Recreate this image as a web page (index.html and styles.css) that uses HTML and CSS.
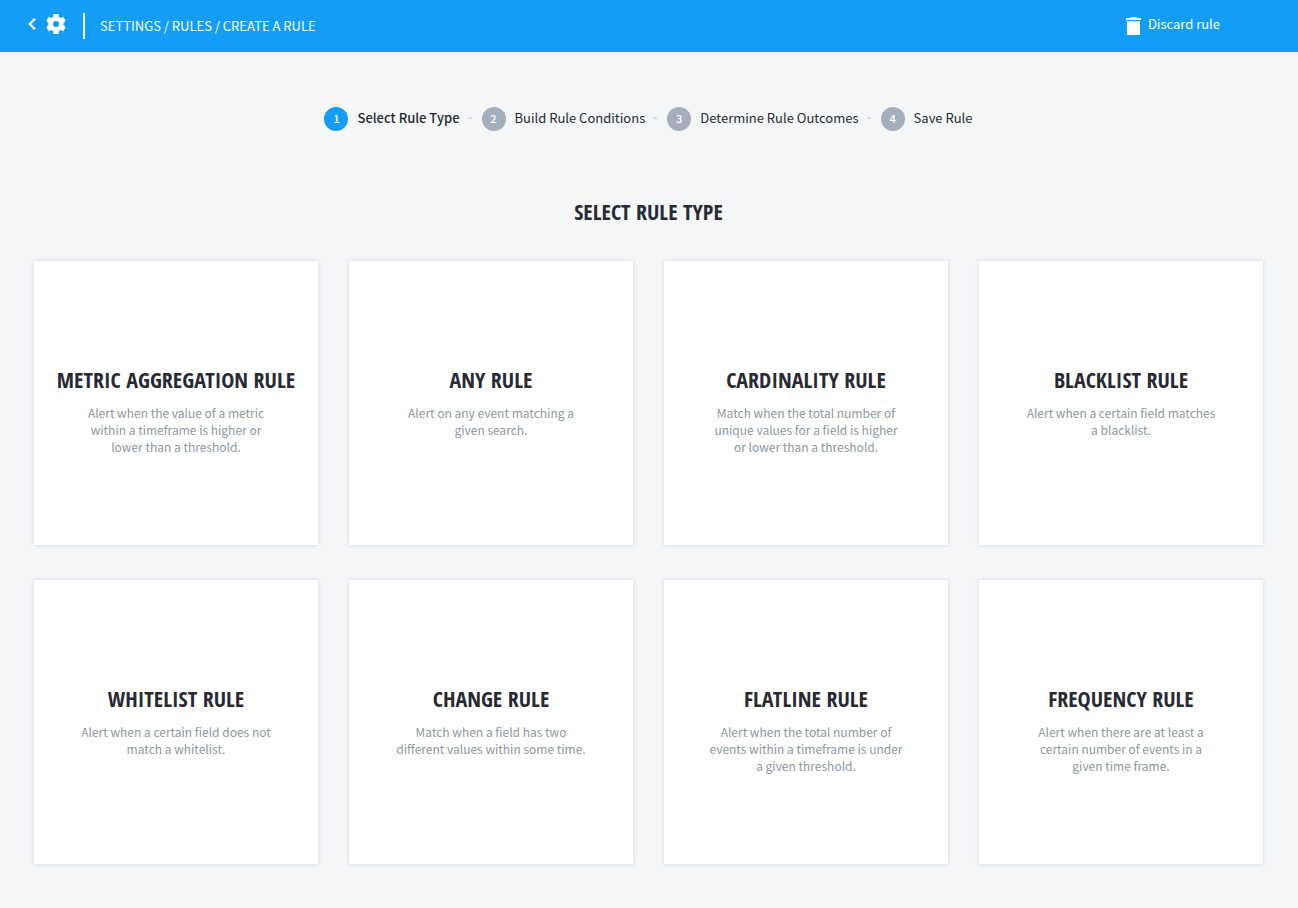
FILE: index.html
```html
<!DOCTYPE html>
<html lang="en">
<head>
<meta charset="utf-8">
<title>Create a Rule</title>
<link rel="stylesheet" href="styles.css">
</head>
<body>
<header class="topbar">
  <a class="back" href="#" aria-label="Back to settings">
    <svg class="chevron" viewBox="0 0 8 12"><path d="M7 .8 1.8 6 7 11.2" fill="none" stroke="#fff" stroke-width="2.2"/></svg>
    <svg class="gear" viewBox="2 2 20 20"><path fill="#fff" d="M19.43 12.98c.04-.32.07-.64.07-.98s-.03-.66-.07-.98l2.11-1.65c.19-.15.24-.42.12-.64l-2-3.46c-.12-.22-.39-.3-.61-.22l-2.49 1c-.52-.4-1.08-.73-1.69-.98l-.38-2.65C14.46 2.18 14.25 2 14 2h-4c-.25 0-.46.18-.49.42l-.38 2.65c-.61.25-1.17.59-1.69.98l-2.49-1c-.23-.09-.49 0-.61.22l-2 3.46c-.13.22-.07.49.12.64l2.11 1.65c-.04.32-.07.65-.07.98s.03.66.07.98l-2.11 1.65c-.19.15-.24.42-.12.64l2 3.46c.12.22.39.3.61.22l2.49-1c.52.4 1.08.73 1.69.98l.38 2.65c.03.24.24.42.49.42h4c.25 0 .46-.18.49-.42l.38-2.65c.61-.25 1.17-.59 1.69-.98l2.49 1c.23.09.49 0 .61-.22l2-3.46c.12-.22.07-.49-.12-.64l-2.11-1.65zM12 15.1a3.1 3.1 0 1 1 0-6.2 3.1 3.1 0 0 1 0 6.2z"/></svg>
  </a>
  <nav class="crumbs">SETTINGS / RULES / CREATE A RULE</nav>
  <button class="discard" type="button">
    <svg class="trash" viewBox="0 0 15 18"><path fill="#fff" d="M0 1h4l1-1h5l1 1h4v2H0zM1 4h13v13q0 1-1 1H2q-1 0-1-1z"/></svg>
    <span class="discard-label">Discard rule</span>
  </button>
</header>
<main class="page">
  <ol class="steps">
    <li class="step active"><span class="num">1</span><span class="label">Select Rule Type</span></li>
    <li class="step"><span class="num">2</span><span class="label">Build Rule Conditions</span></li>
    <li class="step"><span class="num">3</span><span class="label">Determine Rule Outcomes</span></li>
    <li class="step"><span class="num">4</span><span class="label">Save Rule</span></li>
  </ol>
  <h1 class="title">SELECT RULE TYPE</h1>
  <div class="cards">
    <button class="card" type="button"><span class="name">METRIC AGGREGATION RULE</span><span class="desc">Alert when the value of a metric<br>within a timeframe is higher or<br>lower than a threshold.</span></button>
    <button class="card" type="button"><span class="name">ANY RULE</span><span class="desc">Alert on any event matching a<br>given search.</span></button>
    <button class="card" type="button"><span class="name">CARDINALITY RULE</span><span class="desc">Match when the total number of<br>unique values for a field is higher<br>or lower than a threshold.</span></button>
    <button class="card" type="button"><span class="name">BLACKLIST RULE</span><span class="desc">Alert when a certain field matches<br>a blacklist.</span></button>
    <button class="card" type="button"><span class="name">WHITELIST RULE</span><span class="desc">Alert when a certain field does not<br>match a whitelist.</span></button>
    <button class="card" type="button"><span class="name">CHANGE RULE</span><span class="desc">Match when a field has two<br>different values within some time.</span></button>
    <button class="card" type="button"><span class="name">FLATLINE RULE</span><span class="desc">Alert when the total number of<br>events within a timeframe is under<br>a given threshold.</span></button>
    <button class="card" type="button"><span class="name">FREQUENCY RULE</span><span class="desc">Alert when there are at least a<br>certain number of events in a<br>given time frame.</span></button>
  </div>
</main>
</body>
</html>
```
FILE: styles.css
```css
* { box-sizing: border-box; }
body {
  margin: 0;
  background: #f4f6f8;
  color: #272a33;
  font: 13px/20px "Noto Sans CJK SC", "Noto Sans", sans-serif;
}
button { font: inherit; border: 0; cursor: pointer; }
svg { display: block; }

.topbar {
  display: flex;
  align-items: center;
  height: 52px;
  padding: 0 78px 0 28px;
  background: #149df4;
  color: #fff;
}
.back {
  display: flex;
  align-items: center;
  gap: 10px;
  padding-bottom: 4px;
}
.chevron { width: 8px; height: 12px; }
.gear { width: 20px; height: 20px; }
.crumbs {
  margin-left: 17px;
  padding: 3px 0 3px 15px;
  border-left: 2px solid #fff;
}
.discard {
  display: flex;
  align-items: center;
  gap: 7px;
  margin-left: auto;
  padding: 0;
  background: none;
  color: #fff;
}
.discard-label { padding-bottom: 4px; }
.trash { width: 15px; height: 18px; }

.page { padding: 55px 35px 44px 34px; }
.steps {
  display: flex;
  justify-content: center;
  margin: 0;
  padding: 0;
  list-style: none;
}
.step { display: flex; align-items: center; }
.step:not(:last-child)::after {
  content: "";
  width: 4px;
  height: 2px;
  margin: 0 10px 2px 8px;
  background: #d9dce2;
}
.label { padding-bottom: 2px; }
.num {
  width: 24px;
  height: 24px;
  margin-right: 9px;
  border-radius: 50%;
  background: #a5aebd;
  color: #fff;
  font-size: 11px;
  font-weight: 500;
  line-height: 23px;
  text-align: center;
}
.active .num { background: #149df4; }
.active .label { font-weight: 500; }

.title, .name {
  font: bold 22px/30px "Open Sans Condensed", "Noto Sans Condensed", "Roboto Condensed", sans-serif;
}
.title { margin: 65px 0 35px; text-align: center; }
.cards {
  display: grid;
  grid-template-columns: repeat(4, 1fr);
  gap: 35px 31px;
}
.card {
  display: flex;
  flex-direction: column;
  align-items: center;
  justify-content: flex-start;
  aspect-ratio: 1;
  padding: 103px 0 0;
  background: #fff;
  color: #272a33;
  box-shadow: 0 0 4px #cfd5de;
}
.name { white-space: nowrap; }
.desc {
  margin-top: 10px;
  color: #8b97a5;
  font-size: 12px;
  line-height: 17px;
}
```
